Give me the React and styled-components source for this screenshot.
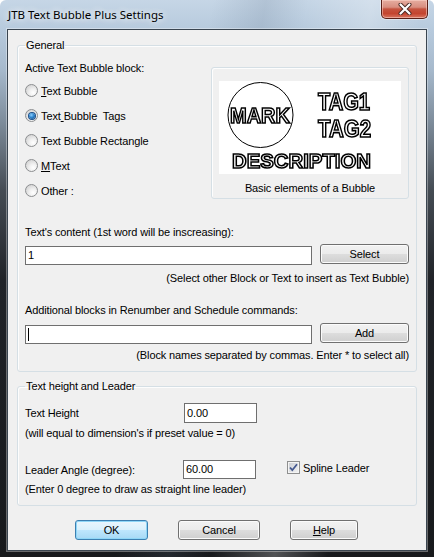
import React from 'react';
import styled, { createGlobalStyle, css } from 'styled-components';

const Global = createGlobalStyle`
  html, body { margin: 0; padding: 0; background: #ffffff; }
  body { font-family: "Liberation Sans", Arial, sans-serif; font-size: 11px; letter-spacing: -0.12px; color: #000; }
  * { box-sizing: border-box; }
`;

const Window = styled.div`
  width: 434px;
  height: 557px;
  display: flex;
  flex-direction: column;
  padding: 0 7px 6px 7px;
  border-radius: 6px 6px 0 0;
  background:
    linear-gradient(100deg, rgba(255,255,255,0) 40%, rgba(90,110,135,0.18) 50%, rgba(255,255,255,0) 58%, rgba(255,255,255,0.25) 70%, rgba(255,255,255,0) 80%),
    linear-gradient(to bottom, #c6d6e6 0px, #b7cadd 30px, #a6b9cc 70px, #7f8e9d 120px, #454c54 190px, #202328 280px, #17191c 100%);
`;

const TitleBar = styled.div`
  height: 29px;
  flex: none;
  display: flex;
  align-items: flex-start;
  justify-content: space-between;
  margin: 0 -7px;
  padding: 0 6px 0 8px;
`;

const Title = styled.div`
  font-family: "Noto Sans", "Liberation Sans", sans-serif;
  font-size: 11.5px;
  letter-spacing: 0;
  line-height: 16px;
  padding-top: 7px;
  color: #000;
  text-shadow: 0 0 6px rgba(255,255,255,0.9), 0 0 10px rgba(255,255,255,0.7);
`;

const CloseButton = styled.div`
  width: 47px;
  height: 19px;
  display: flex;
  align-items: center;
  justify-content: center;
  border: 1px solid #5a2018;
  border-top: none;
  border-radius: 0 0 5px 5px;
  background: linear-gradient(to bottom, #e6ada0 0%, #d88e7f 40%, #c5533f 50%, #c4452f 75%, #d87560 100%);
  box-shadow: inset 0 0 0 1px rgba(255,220,210,0.5), 0 0 0 1px rgba(255,255,255,0.4);
`;

const Client = styled.div`
  flex: 1;
  display: flex;
  flex-direction: column;
  background: #f0f0f0;
  border: 1px solid #3a4550;
  box-shadow: 0 0 0 1px rgba(255,255,255,0.35);
`;

const GroupBox = styled.fieldset`
  margin: ${p => p.$mt}px 9px 0 9px;
  padding: 0 7px ${p => p.$pb}px 7px;
  min-width: 0;
  border: 1px solid #d5dfe5;
  border-radius: 3px;
  box-shadow: inset 1px 1px 0 #fdfdfd;
`;

const Legend = styled.legend`
  padding: 0 1px;
  margin-left: 0;
  font-size: 11px;
  line-height: 13px;
`;

const TopRow = styled.div`
  display: flex;
  align-items: flex-start;
  margin-top: 8px;
`;

const LeftCol = styled.div`
  display: flex;
  flex-direction: column;
`;

const Label = styled.div`
  font-size: 11px;
  line-height: 16px;
  margin-top: ${p => p.$mt || 0}px;
  white-space: pre;
`;

const RadioList = styled.div`
  display: flex;
  flex-direction: column;
  margin-top: 2px;
`;

const RadioRow = styled.label`
  height: 25px;
  display: flex;
  align-items: center;
  gap: 3px;
  white-space: pre;
  font-size: 11px;
`;

const RadioCircle = styled.span`
  width: 13px;
  height: 13px;
  border-radius: 50%;
  border: 1px solid #8c8e90;
  display: flex;
  align-items: center;
  justify-content: center;
  background: radial-gradient(circle at 65% 70%, #ffffff 0%, #f0f0f0 35%, #d4d4d4 80%, #c8c8c8 100%);
  &::after {
    content: "";
    width: 6px;
    height: 6px;
    border-radius: 50%;
    display: ${p => (p.$checked ? 'block' : 'none')};
    background: radial-gradient(circle at 40% 35%, #8ed0ff 0%, #2f86cf 45%, #0c3d7a 100%);
    box-shadow: 0 0 0 1px #1b4f8a;
  }
`;

const ImageBox = styled.div`
  margin-left: auto;
  margin-top: 7px;
  width: 198px;
  height: 132px;
  border: 1px solid #d5dfe5;
  border-radius: 3px;
  box-shadow: inset 1px 1px 0 #fdfdfd;
  padding: 13px 7px 0 7px;
  display: flex;
  flex-direction: column;
`;

const Picture = styled.div`
  width: 182px;
  height: 93px;
  background: #ffffff;
  display: flex;
  will-change: transform;
`;

const Caption = styled.div`
  margin-top: 7px;
  text-align: center;
  font-size: 11px;
  line-height: 14px;
`;

const FieldRow = styled.div`
  display: flex;
  align-items: ${p => p.$align || 'flex-start'};
  gap: ${p => p.$gap || 0}px;
  margin-top: ${p => p.$mt}px;
`;

const TextBox = styled.div`
  width: ${p => p.$w}px;
  height: ${p => p.$h || 19}px;
  margin-top: ${p => p.$mt || 0}px;
  border: 1px solid #6f6f6f;
  background: #ffffff;
  padding-left: 2px;
  font-size: 11px;
  line-height: ${p => (p.$h || 19) - 2}px;
  display: flex;
  align-items: center;
`;

const Caret = styled.span`
  width: 1px;
  height: 13px;
  background: #000;
`;

const Note = styled.div`
  margin-top: ${p => p.$mt}px;
  font-size: 11px;
  line-height: 16px;
  text-align: ${p => p.$right ? 'right' : 'left'};
  white-space: pre;
`;

const RowLabel = styled.div`
  width: ${p => p.$w}px;
  font-size: 11px;
  line-height: 14px;
`;

const CheckWrap = styled.label`
  display: flex;
  align-items: center;
  gap: 3px;
  height: 15px;
  margin-left: 31px;
  align-self: flex-start;
  font-size: 11px;
`;

const CheckBox = styled.span`
  width: 13px;
  height: 13px;
  border: 1px solid #8e8f8f;
  background: linear-gradient(135deg, #c9ccd2 0%, #dfe1e4 50%, #f4f4f4 100%);
  box-shadow: inset 0 0 0 1px #f4f4f4;
  display: flex;
  align-items: center;
  justify-content: center;
`;

const Button = styled.button`
  width: ${p => p.$w}px;
  height: 20px;
  padding: 0;
  font-family: "Liberation Sans", Arial, sans-serif;
  font-size: 11px;
  letter-spacing: -0.12px;
  color: #000;
  border: 1px solid #707070;
  border-radius: 3px;
  background: linear-gradient(to bottom, #f2f2f2 0%, #ebebeb 50%, #dddddd 51%, #cfcfcf 100%);
  box-shadow: inset 0 0 0 1px #fbfbfb;
  ${p => p.$default && css`
    border-color: #3c7fb1;
    background: linear-gradient(to bottom, #eaf6fd 0%, #d9f0fc 50%, #bee6fd 51%, #a7d9f5 100%);
    box-shadow: inset 0 0 0 1px #8fd6f7;
  `}
`;

const ButtonRow = styled.div`
  display: flex;
  gap: 30px;
  padding-left: 67px;
  margin-top: 14px;
`;

const bubbleText = {
  fontFamily: '"Liberation Sans", Arial, sans-serif',
  fontWeight: 'bold',
  fill: '#ffffff',
  stroke: '#000000',
  strokeWidth: 1.6,
  letterSpacing: 0,
};

function BubbleDrawing() {
  return (
    <svg width="182" height="93" viewBox="0 0 182 93" style={{ opacity: 0.999 }}>
      <circle cx="41.5" cy="34" r="32.5" fill="none" stroke="#000" strokeWidth="1" />
      <text x="11" y="42" fontSize="22" textLength="60" lengthAdjust="spacingAndGlyphs" style={bubbleText}>MARK</text>
      <text x="99" y="29" fontSize="23" textLength="52" lengthAdjust="spacingAndGlyphs" style={bubbleText}>TAG1</text>
      <text x="99" y="56" fontSize="23" textLength="53" lengthAdjust="spacingAndGlyphs" style={bubbleText}>TAG2</text>
      <text x="13" y="87" fontSize="21" textLength="139" lengthAdjust="spacingAndGlyphs" style={bubbleText}>DESCRIPTION</text>
    </svg>
  );
}

const radios = [
  { key: 'tb', label: <><u>T</u>ext Bubble</> },
  { key: 'tt', label: <>Text<u> </u>Bubble  Tags</>, checked: true },
  { key: 'tr', label: <>Text Bubble Rectangle</> },
  { key: 'mt', label: <><u>M</u>Text</> },
  { key: 'ot', label: <>Other :</> },
];

export default function App() {
  return (
    <>
      <Global />
      <Window>
        <TitleBar>
          <Title>JTB Text Bubble Plus Settings</Title>
          <CloseButton>
            <svg width="14" height="12" viewBox="0 0 14 12">
              <path d="M2.5 1.5 L11.5 10.5 M11.5 1.5 L2.5 10.5" stroke="#4a2a24" strokeWidth="4" strokeLinecap="round" />
              <path d="M2.5 1.5 L11.5 10.5 M11.5 1.5 L2.5 10.5" stroke="#ffffff" strokeWidth="2.2" strokeLinecap="round" />
            </svg>
          </CloseButton>
        </TitleBar>
        <Client>
          <GroupBox $mt={9} $pb={8}>
            <Legend>General</Legend>
            <TopRow>
              <LeftCol>
                <Label>Active Text Bubble block:</Label>
                <RadioList>
                  {radios.map(r => (
                    <RadioRow key={r.key}>
                      <RadioCircle $checked={r.checked} />
                      <span>{r.label}</span>
                    </RadioRow>
                  ))}
                </RadioList>
              </LeftCol>
              <ImageBox>
                <Picture><BubbleDrawing /></Picture>
                <Caption>Basic elements of a Bubble</Caption>
              </ImageBox>
            </TopRow>
            <Label $mt={21}>Text's content (1st word will be inscreasing):</Label>
            <FieldRow $mt={4} $gap={8}>
              <TextBox $w={287} $mt={2}>1</TextBox>
              <Button $w={89}>Select</Button>
            </FieldRow>
            <Note $mt={5} $right>(Select other Block or Text to insert as Text Bubble)</Note>
            <Label $mt={16}>Additional blocks in Renumber and Schedule commands:</Label>
            <FieldRow $mt={5} $gap={8}>
              <TextBox $w={287} $mt={2}><Caret /></TextBox>
              <Button $w={89}>Add</Button>
            </FieldRow>
            <Note $mt={3} $right>(Block names separated by commas. Enter * to select all)</Note>
          </GroupBox>
          <GroupBox $mt={8} $pb={8}>
            <Legend>Text height and Leader</Legend>
            <FieldRow $mt={10} $align="center">
              <RowLabel $w={159}>Text Height</RowLabel>
              <TextBox $w={73} $h={20}>0.00</TextBox>
            </FieldRow>
            <Note $mt={2}>(will equal to dimension's if preset value = 0)</Note>
            <FieldRow $mt={19} $align="center">
              <RowLabel $w={158}>Leader Angle (degree):</RowLabel>
              <TextBox $w={73}>60.00</TextBox>
              <CheckWrap>
                <CheckBox>
                  <svg width="9" height="9" viewBox="0 0 9 9">
                    <path d="M1 4.5 L3.3 7.2 L8 1.2" fill="none" stroke="#44588f" strokeWidth="1.8" />
                  </svg>
                </CheckBox>
                <span>Spline Leader</span>
              </CheckWrap>
            </FieldRow>
            <Note $mt={2}>(Enter 0 degree to draw as straight line leader)</Note>
          </GroupBox>
          <ButtonRow>
            <Button $w={73} $default>OK</Button>
            <Button $w={82}>Cancel</Button>
            <Button $w={68}><u>H</u>elp</Button>
          </ButtonRow>
        </Client>
      </Window>
    </>
  );
}
